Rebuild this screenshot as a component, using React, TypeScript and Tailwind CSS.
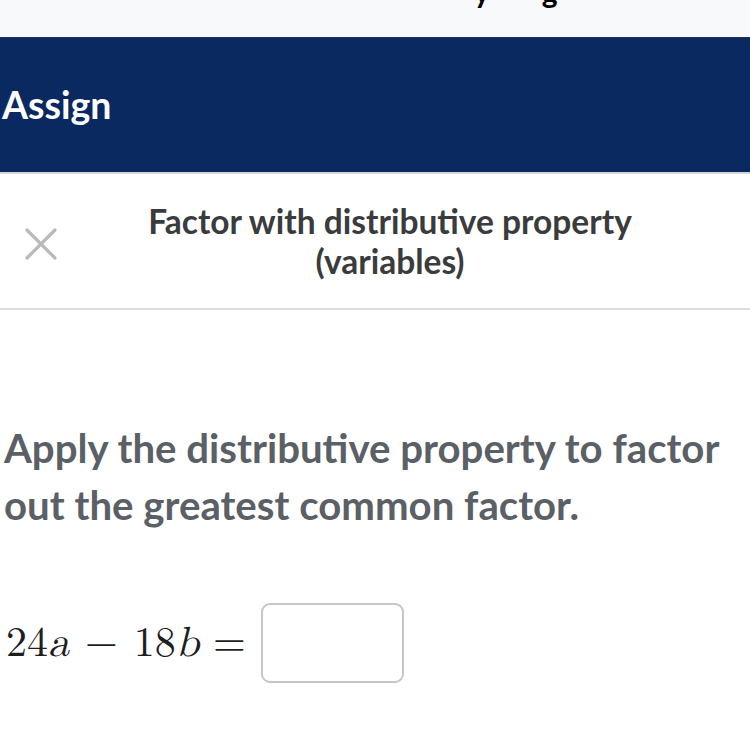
import React from "react";

function CloseIcon() {
	return (
		<svg width="34" height="34" viewBox="0 0 34 34" fill="none" stroke="#b9b9b9" strokeWidth="3.2" strokeLinecap="round">
			<path d="M3 3 L31 31" />
			<path d="M31 3 L3 31" />
		</svg>
	);
}

export default function App() {
	return (
		<div className="w-[750px] h-[750px] overflow-hidden bg-white font-['Lato','Noto_Sans',sans-serif]">
			{/* clipped title line of the page above */}
			<div className="h-[38px] overflow-hidden bg-[#f8f9fa] border-b border-[#1d3358]">
				<div className="-mt-[24px] flex gap-[52px] pl-[474px] text-[30px] leading-[30px] font-bold text-black">
					<span>y</span>
					<span>g</span>
				</div>
			</div>

			<div className="h-[136px] flex items-center pl-[2px] bg-[#0a2961] border-b-2 border-[#d4d6da]">
				<h1 className="text-[37.5px] font-bold text-white">Assign</h1>
			</div>

			<div className="relative h-[136px] flex items-center border-b-2 border-[#dddddd]">
				<div className="absolute left-[24px] top-[53px]">
					<CloseIcon />
				</div>
				<h2 className="w-full pl-[80px] pr-[50px] text-center text-[33.5px] leading-[40px] font-bold text-[#3a3b3d]">
					Factor with distributive property
					<br />
					(variables)
				</h2>
			</div>

			<p className="mt-[109px] pl-[4px] pr-[4px] text-[40.2px] leading-[57px] font-bold text-[#5b5f66]">
				Apply the distributive property to factor out the greatest common factor.
			</p>

			<div className="mt-[70px] flex items-center pl-[6px]">
				<span className="font-['Latin_Modern_Math','DejaVu_Serif','Liberation_Serif',serif] text-[42px] text-[#1e1e1e]">
					24<i>a</i>
					<span className="mx-[16px]">−</span>
					18<i>b</i>
					<span className="ml-[14px]">=</span>
				</span>
				<div className="ml-[15px] w-[143px] h-[80px] rounded-[9px] border-2 border-[#c6c6c6] bg-white" />
			</div>
		</div>
	);
}
